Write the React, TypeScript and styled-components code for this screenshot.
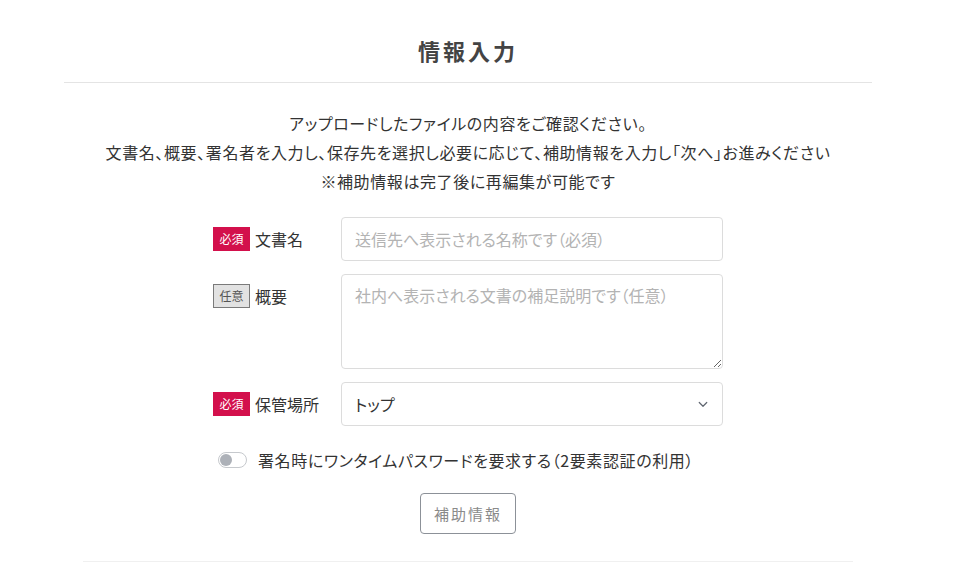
import React, { useState } from 'react';
import styled, { createGlobalStyle } from 'styled-components';

const GlobalStyle = createGlobalStyle`
  html, body {
    margin: 0;
    padding: 0;
    background: #ffffff;
  }
  body {
    font-family: "Noto Sans CJK JP", "Noto Sans", sans-serif;
    color: #333333;
  }
  * {
    box-sizing: border-box;
  }
`;

type BadgeKind = 'required' | 'optional';

function Badge({ kind }: { kind: BadgeKind }) {
  return <StyledBadge $kind={kind}>{kind === 'required' ? '必須' : '任意'}</StyledBadge>;
}

function FieldLabel({ kind, text }: { kind: BadgeKind; text: string }) {
  return (
    <LabelCell>
      <Badge kind={kind} />
      <LabelText>{text}</LabelText>
    </LabelCell>
  );
}

export default function App() {
  const [title, setTitle] = useState('');
  const [summary, setSummary] = useState('');
  const [folder, setFolder] = useState('top');
  const [otp, setOtp] = useState(false);

  return (
    <>
      <GlobalStyle />
      <Outer>
        <Page>
          <Header>
            <Title>情報入力</Title>
          </Header>
          <Lead>
            <p>アップロードしたファイルの内容をご確認ください。</p>
            <p>文書名、概要、署名者を入力し、保存先を選択し必要に応じて、補助情報を入力し「次へ」お進みください</p>
            <p>※補助情報は完了後に再編集が可能です</p>
          </Lead>
          <Form>
            <FieldLabel kind="required" text="文書名" />
            <TextInput
              value={title}
              onChange={(e) => setTitle(e.target.value)}
              placeholder="送信先へ表示される名称です（必須）"
            />
            <FieldLabel kind="optional" text="概要" />
            <TextArea
              value={summary}
              onChange={(e) => setSummary(e.target.value)}
              placeholder="社内へ表示される文書の補足説明です（任意）"
            />
            <FieldLabel kind="required" text="保管場所" />
            <SelectWrap>
              <Select value={folder} onChange={(e) => setFolder(e.target.value)}>
                <option value="top">トップ</option>
              </Select>
              <Chevron viewBox="0 0 16 16" width="12" height="12">
                <path d="M3 6l5 5 5-5" fill="none" stroke="#5f6670" strokeWidth="1.6" strokeLinecap="round" strokeLinejoin="round" />
              </Chevron>
            </SelectWrap>
          </Form>
          <SwitchRow onClick={() => setOtp(!otp)}>
            <SwitchTrack $on={otp}>
              <SwitchKnob $on={otp} />
            </SwitchTrack>
            <span>署名時にワンタイムパスワードを要求する（2要素認証の利用）</span>
          </SwitchRow>
          <ButtonRow>
            <OutlineButton type="button">補助情報</OutlineButton>
          </ButtonRow>
          <Footer />
        </Page>
      </Outer>
    </>
  );
}

const Outer = styled.div`
  padding-right: 25px;
`;

const Page = styled.div`
  max-width: 808px;
  margin: 0 auto;
  display: flex;
  flex-direction: column;
  align-items: center;
`;

const Header = styled.div`
  width: 100%;
  padding: 34px 0 16px;
  border-bottom: 1px solid #e4e4e4;
  display: flex;
  justify-content: center;
`;

const Title = styled.h1`
  margin: 0;
  font-size: 22px;
  line-height: 32px;
  font-weight: 700;
  letter-spacing: 3px;
  color: #444444;
`;

const Lead = styled.div`
  margin-top: 26px;
  text-align: center;
  font-size: 16px;
  line-height: 29px;
  color: #333333;
  white-space: nowrap;
  font-feature-settings: "palt";
  letter-spacing: 0.6px;

  p {
    margin: 0;
  }
`;

const Form = styled.div`
  margin-top: 21px;
  display: grid;
  grid-template-columns: 128px 382px;
  row-gap: 13px;
  align-items: start;
`;

const LabelCell = styled.div`
  height: 44px;
  display: flex;
  align-items: center;
  gap: 5px;
`;

const StyledBadge = styled.span<{ $kind: BadgeKind }>`
  display: inline-flex;
  align-items: center;
  justify-content: center;
  width: 37px;
  height: 24px;
  font-size: 12px;
  line-height: 1;
  color: ${({ $kind }) => ($kind === 'required' ? '#ffffff' : '#555555')};
  background: ${({ $kind }) => ($kind === 'required' ? '#d3104c' : '#e2e2e2')};
  border: 1px solid ${({ $kind }) => ($kind === 'required' ? '#d3104c' : '#7a7a7a')};
`;

const LabelText = styled.span`
  font-size: 16px;
  color: #333333;
`;

const fieldBase = `
  width: 100%;
  border: 1px solid #dcdcdc;
  border-radius: 4px;
  background: #ffffff;
  font-family: "Noto Sans CJK JP", "Noto Sans", sans-serif;
  font-size: 16px;
  font-feature-settings: "palt";
  color: #333333;
  outline: none;
  &::placeholder {
    color: #b3b3b3;
  }
`;

const TextInput = styled.input`
  ${fieldBase}
  height: 44px;
  padding: 0 13px;
`;

const TextArea = styled.textarea`
  ${fieldBase}
  display: block;
  height: 95px;
  padding: 8px 13px;
  line-height: 1.5;
  resize: vertical;
`;

const SelectWrap = styled.div`
  position: relative;
`;

const Select = styled.select`
  ${fieldBase}
  height: 44px;
  padding: 0 36px 0 13px;
  appearance: none;
  -webkit-appearance: none;
`;

const Chevron = styled.svg`
  position: absolute;
  right: 14px;
  top: 16px;
  pointer-events: none;
`;

const SwitchRow = styled.div`
  margin-top: 22px;
  margin-right: 24px;
  display: flex;
  align-items: center;
  gap: 11px;
  font-size: 16px;
  line-height: 24px;
  color: #333333;
  cursor: pointer;
  font-feature-settings: "palt";
  letter-spacing: 0.6px;
`;

const SwitchTrack = styled.span<{ $on: boolean }>`
  position: relative;
  width: 29px;
  height: 16px;
  border-radius: 8px;
  border: 1px solid ${({ $on }) => ($on ? '#0d6efd' : '#c6c9cd')};
  background: ${({ $on }) => ($on ? '#0d6efd' : '#ffffff')};
`;

const SwitchKnob = styled.span<{ $on: boolean }>`
  position: absolute;
  top: 1px;
  left: ${({ $on }) => ($on ? '14px' : '1px')};
  width: 12px;
  height: 12px;
  border-radius: 50%;
  background: ${({ $on }) => ($on ? '#ffffff' : '#adb1b8')};
`;

const ButtonRow = styled.div`
  margin-top: 21px;
  display: flex;
  justify-content: center;
`;

const OutlineButton = styled.button`
  height: 41px;
  padding: 0 13px;
  border: 1px solid #8c9198;
  border-radius: 4px;
  background: #ffffff;
  font-family: "Noto Sans CJK JP", "Noto Sans", sans-serif;
  font-size: 15px;
  letter-spacing: 2px;
  color: #8a8a8a;
  cursor: pointer;
`;

const Footer = styled.div`
  margin-top: 27px;
  width: 770px;
  border-top: 1px solid #f0f0f0;
`;
